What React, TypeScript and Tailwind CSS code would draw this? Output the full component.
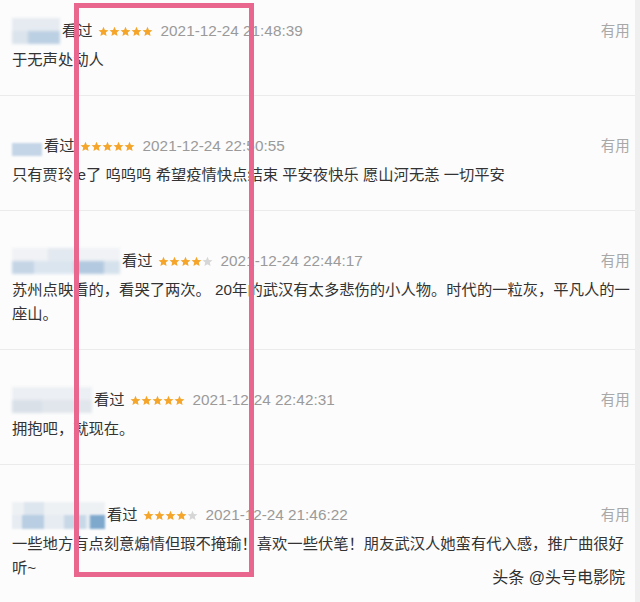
import React from "react";

const FONT = '"Liberation Sans", "Noto Sans CJK SC", sans-serif';

function Star({ on }: { on: boolean }) {
  return (
    <svg width="11" height="11" viewBox="0 0 24 24" className="block">
      <polygon
        points="12,1.5 15.1,8.6 22.8,9.3 17,14.4 18.7,22 12,18 5.3,22 7,14.4 1.2,9.3 8.9,8.6"
        fill={on ? "#f4a52a" : "#d6d6d6"}
      />
    </svg>
  );
}

function Stars({ n }: { n: number }) {
  return (
    <div className="flex items-center">
      {[0, 1, 2, 3, 4].map((i) => (
        <Star key={i} on={i < n} />
      ))}
    </div>
  );
}

type Block = [number, string];

const mosaics: Record<number, { top: Block[]; bottom: Block[]; h: [number, number]; blur: string }> = {
  1: {
    top: [[48, "#e6ebf1"]],
    bottom: [
      [16, "#dbe3ec"],
      [32, "#bcd0e3"],
    ],
    h: [13, 13],
    blur: "blur-[1.5px]",
  },
  2: {
    top: [[30, "#fcfcfc"]],
    bottom: [[30, "#c4d5e7"]],
    h: [6, 13],
    blur: "blur-[1px]",
  },
  3: {
    top: [
      [36, "#f0f2f5"],
      [28, "#e3e9f0"],
      [44, "#f0f2f5"],
    ],
    bottom: [
      [22, "#c5d5e6"],
      [40, "#dbe5ef"],
      [30, "#b3c9df"],
      [16, "#d5e1ec"],
    ],
    h: [13, 13],
    blur: "blur-[1.5px]",
  },
  4: {
    top: [[80, "#eceff3"]],
    bottom: [
      [30, "#d9e0e8"],
      [50, "#e1e6ec"],
    ],
    h: [13, 13],
    blur: "blur-[1.5px]",
  },
  5: {
    top: [
      [12, "#eef1f4"],
      [20, "#dde5ee"],
      [61, "#eef1f4"],
    ],
    bottom: [
      [10, "#e6ecf2"],
      [22, "#b9cee2"],
      [20, "#e6ecf2"],
      [22, "#c9d8e7"],
      [4, "#e6ecf2"],
      [15, "#7fa8cd"],
    ],
    h: [13, 14],
    blur: "blur-[1.2px]",
  },
};

function Blur({ variant }: { variant: number }) {
  const m = mosaics[variant];
  return (
    <div className={`flex flex-col ${m.blur}`}>
      <div className="flex">
        {m.top.map(([w, c], i) => (
          <div key={i} style={{ width: w, height: m.h[0], background: c }} />
        ))}
      </div>
      <div className="flex">
        {m.bottom.map(([w, c], i) => (
          <div key={i} style={{ width: w, height: m.h[1], background: c }} />
        ))}
      </div>
    </div>
  );
}

type Row = {
  blur: number;
  stars: number;
  date: string;
  lines: string[];
  first?: boolean;
};

const rows: Row[] = [
  { blur: 1, stars: 5, date: "2021-12-24 21:48:39", lines: ["于无声处动人"], first: true },
  {
    blur: 2,
    stars: 5,
    date: "2021-12-24 22:50:55",
    lines: ["只有贾玲 e了 呜呜呜 希望疫情快点结束 平安夜快乐 愿山河无恙 一切平安"],
  },
  {
    blur: 3,
    stars: 4,
    date: "2021-12-24 22:44:17",
    lines: ["苏州点映看的，看哭了两次。 20年的武汉有太多悲伤的小人物。时代的一粒灰，平凡人的一", "座山。"],
  },
  { blur: 4, stars: 5, date: "2021-12-24 22:42:31", lines: ["拥抱吧，就现在。"] },
  {
    blur: 5,
    stars: 4,
    date: "2021-12-24 21:46:22",
    lines: ["一些地方有点刻意煽情但瑕不掩瑜！喜欢一些伏笔！朋友武汉人她蛮有代入感，推广曲很好", "听~"],
  },
];

function Comment({ r }: { r: Row }) {
  return (
    <div
      className={`${r.first ? "pt-[20px]" : "pt-[39px]"} pb-[23px] pl-[12px] pr-[5px] border-b border-[#ebebeb]`}
    >
      <div className="flex items-center h-[22px]">
        <Blur variant={r.blur} />
        <span className="ml-[2px] text-[15.3px] text-[#333] leading-[22px]">看过</span>
        <div className="ml-[5px]">
          <Stars n={r.stars} />
        </div>
        <span className="ml-[8px] text-[15.3px] text-[#9a9a9a] leading-[22px]">{r.date}</span>
        <span className="ml-auto text-[14.5px] text-[#a8a8a8] leading-[22px]">有用</span>
      </div>
      <div className="mt-[6px] text-[15.3px] text-[#333] leading-[24px] whitespace-nowrap">
        {r.lines.map((l, i) => (
          <div key={i}>{l}</div>
        ))}
      </div>
    </div>
  );
}

export default function App() {
  return (
    <div
      className="relative w-[640px] h-[602px] overflow-hidden bg-[#fcfcfc] flex"
      style={{ fontFamily: FONT }}
    >
      <div className="flex-1 flex flex-col">
        {rows.map((r, i) => (
          <Comment key={i} r={r} />
        ))}
      </div>
      <div className="w-[6px] bg-[#efefef]" />
      <div className="absolute left-[74px] top-[3px] w-[180px] h-[574px] border-[5px] border-[#e9668f]" />
      <div
        className="absolute right-[15px] top-[566px] text-[16px] leading-[24px] text-[#2f2f2f]"
        style={{ textShadow: "0 0 2px #fff, 0 0 2px #fff" }}
      >
        头条 @头号电影院
      </div>
    </div>
  );
}
